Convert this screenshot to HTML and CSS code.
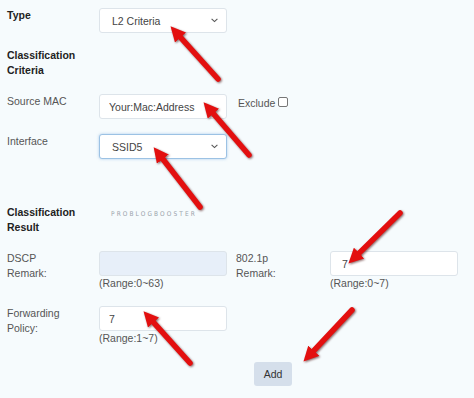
FILE: index.html
```html
<!DOCTYPE html>
<html lang="en">
<head>
    <meta charset="UTF-8">
    <meta name="viewport" content="width=device-width, initial-scale=1.0">
    <title>QoS Classification Rule</title>
    <link rel="stylesheet" href="styles.css">
</head>
<body>
    <div class="page">
        <!-- Type -->
        <div class="row">
            <div class="label bold">Type</div>
            <div class="select">
                <span>L2 Criteria</span>
                <svg class="chevron" width="7" height="5" viewBox="0 0 7 5"><polyline points="0.6,0.8 3.5,3.6 6.4,0.8" /></svg>
            </div>
        </div>

        <div class="heading">Classification<br>Criteria</div>

        <!-- Source MAC -->
        <div class="row row-mac">
            <div class="label">Source MAC</div>
            <input class="field" type="text" value="Your:Mac:Address">
            <div class="exclude">Exclude <span class="check"></span></div>
        </div>

        <!-- Interface -->
        <div class="row row-iface">
            <div class="label">Interface</div>
            <div class="select focused">
                <span>SSID5</span>
                <svg class="chevron" width="7" height="5" viewBox="0 0 7 5"><polyline points="0.6,0.8 3.5,3.6 6.4,0.8" /></svg>
            </div>
        </div>

        <div class="row row-result">
            <div class="heading">Classification<br>Result</div>
            <div class="watermark">PROBLOGBOOSTER</div>
        </div>

        <!-- Remark values -->
        <div class="row row-dscp">
            <div class="label">DSCP<br>Remark:</div>
            <div class="cell">
                <input class="field filled" type="text" value="">
                <div class="range">(Range:0~63)</div>
            </div>
            <div class="label">802.1p<br>Remark:</div>
            <div class="cell">
                <input class="field" type="text" value="7">
                <div class="range">(Range:0~7)</div>
            </div>
        </div>

        <!-- Forwarding -->
        <div class="row row-fwd">
            <div class="label">Forwarding<br>Policy:</div>
            <div class="cell">
                <input class="field" type="text" value="7">
                <div class="range">(Range:1~7)</div>
            </div>
        </div>

        <div class="actions">
            <button class="add-btn">Add</button>
        </div>
    </div>

    <!-- red pointer arrows drawn over the form -->
    <svg class="arrows" width="474" height="398" viewBox="0 0 474 398">
        <defs>
            <marker id="head" viewBox="0 0 10 10" refX="3.85" refY="5" markerUnits="userSpaceOnUse" markerWidth="15" markerHeight="15" orient="auto">
                <path d="M0,0 L10,5 L0,10 z" fill="#e30f0f" />
            </marker>
        </defs>
        <g class="arrow-lines">
            <line x1="218" y1="79" x2="176.7" y2="33.2" />
            <line x1="249" y1="155" x2="209.6" y2="109.3" />
            <line x1="200" y1="207" x2="159.3" y2="154.5" />
            <line x1="400" y1="213" x2="355" y2="257.1" />
            <line x1="190" y1="363" x2="149.7" y2="318.2" />
            <line x1="352" y1="310" x2="309.8" y2="354.9" />
        </g>
    </svg>
</body>
</html>
```

FILE: styles.css
```css
/* General */
body {
    margin: 0;
    background: #f6fbfd;
    font-family: 'Liberation Sans', Arial, sans-serif;
    font-size: 10.5px;
    color: #555;
    position: relative;
    height: 398px;
    overflow: hidden;
}

.page {
    display: flex;
    flex-direction: column;
    padding: 8px 0 0 7px;
}

/* Rows */
.row {
    display: grid;
    grid-template-columns: 92px 137px 94px 128px;
    align-items: start;
}

.label {
    line-height: 15px;
    color: #555;
}

.bold,
.heading {
    font-weight: bold;
    color: #222;
}

.heading {
    line-height: 15px;
    margin-top: 15px;
}

.row-mac {
    margin-top: 16px;
}

.row-iface {
    margin-top: 15px;
}

.row-result {
    margin-top: 46px;
}

.row-result .heading {
    margin-top: 0;
}

.row-dscp {
    margin-top: 16px;
}

.row-fwd {
    margin-top: 15px;
}

/* Controls */
.select,
.field {
    box-sizing: border-box;
    width: 128px;
    height: 25px;
    border: 1px solid #dde4ea;
    border-radius: 3px;
    background: #fff;
    font-family: inherit;
    font-size: 10.5px;
    color: #444;
}

.select {
    display: flex;
    align-items: center;
    justify-content: space-between;
    padding: 0 8px 0 12px;
}

.select.focused {
    border-color: #9cc2e4;
    box-shadow: 0 0 3px rgba(110, 165, 220, 0.55);
}

.chevron polyline {
    fill: none;
    stroke: #555;
    stroke-width: 1.1;
}

.field {
    display: block;
    padding: 0 9px;
    margin: 0;
    outline: none;
}

.field.filled {
    background: #e7eff9;
}

.row-dscp .cell:last-child .field {
    padding-left: 11px;
}

.range {
    line-height: 15px;
    color: #555;
}

.exclude {
    padding: 2px 0 0 2px;
    line-height: 15px;
    display: flex;
    align-items: center;
}

.check {
    display: inline-block;
    width: 8px;
    height: 8px;
    margin: -4px 0 0 3px;
    border: 1px solid #777;
    border-radius: 2px;
    background: #fff;
}

.watermark {
    padding-top: 5px;
    padding-left: 12px;
    font-size: 6.5px;
    letter-spacing: 2.1px;
    color: #9aa3ab;
    font-family: 'DejaVu Sans Condensed', 'Liberation Sans Narrow', sans-serif;
    white-space: nowrap;
}

/* Button */
.actions {
    margin-top: 16px;
    padding-left: 247px;
}

.add-btn {
    width: 38px;
    height: 24px;
    border: none;
    border-radius: 3px;
    background: #d5dfeb;
    font-family: inherit;
    font-size: 10.5px;
    color: #333;
    padding: 0;
}

/* Arrows overlay */
.arrows {
    position: absolute;
    left: 0;
    top: 0;
    pointer-events: none;
    filter: drop-shadow(1px 1px 1px rgba(60, 0, 0, 0.6));
}

.arrow-lines line {
    stroke: #e30f0f;
    stroke-width: 5.5;
    stroke-linecap: round;
    marker-end: url(#head);
}
```
